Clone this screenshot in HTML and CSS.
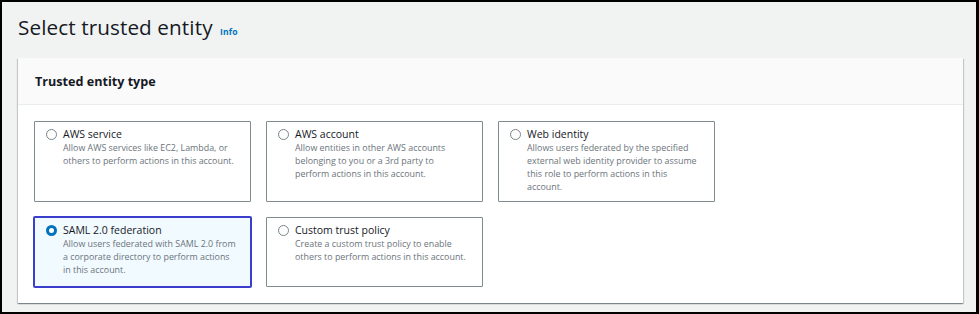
FILE: index.html
```html
<!DOCTYPE html>
<html lang="en">
<head>
  <meta charset="UTF-8">
  <title>Select trusted entity</title>
  <link rel="stylesheet" href="styles.css">
</head>
<body>

  <div class="page">
    <!-- Page header -->
    <h1 class="page-title">Select trusted entity <a class="info" href="#">Info</a></h1>

    <!-- Trusted entity type -->
    <section class="panel">
      <div class="panel-head">
        <h2>Trusted entity type</h2>
      </div>
      <div class="tiles">
        <label class="tile">
          <span class="radio"></span>
          <span class="tile-text">
            <span class="tile-title">AWS service</span>
            <span class="tile-desc">Allow AWS services like EC2, Lambda, or others to perform actions in this account.</span>
          </span>
        </label>
        <label class="tile">
          <span class="radio"></span>
          <span class="tile-text">
            <span class="tile-title">AWS account</span>
            <span class="tile-desc">Allow entities in other AWS accounts belonging to you or a 3rd party to perform actions in this account.</span>
          </span>
        </label>
        <label class="tile">
          <span class="radio"></span>
          <span class="tile-text">
            <span class="tile-title">Web identity</span>
            <span class="tile-desc">Allows users federated by the specified external web identity provider to assume this role to perform actions in this account.</span>
          </span>
        </label>
        <label class="tile selected">
          <span class="radio checked"></span>
          <span class="tile-text">
            <span class="tile-title">SAML 2.0 federation</span>
            <span class="tile-desc">Allow users federated with SAML 2.0 from a corporate directory to perform actions in this account.</span>
          </span>
        </label>
        <label class="tile">
          <span class="radio"></span>
          <span class="tile-text">
            <span class="tile-title">Custom trust policy</span>
            <span class="tile-desc">Create a custom trust policy to enable others to perform actions in this account.</span>
          </span>
        </label>
      </div>
    </section>
  </div>

</body>
</html>
```

FILE: styles.css
```css
html, body {
  margin: 0;
  padding: 0;
}
body {
  font-family: "Open Sans", "Noto Sans", sans-serif;
  color: #16191f;
}
.page {
  box-sizing: border-box;
  width: 979px;
  height: 314px;
  border: 2px solid #000;
  border-right-width: 3px;
  background: #f1f3f3;
  padding: 0 13px 0 16px;
  overflow: hidden;
}
.page-title {
  margin: 0;
  padding-top: 10px;
  font-size: 20.7px;
  line-height: 30px;
  font-weight: 400;
  letter-spacing: 0.1px;
}
.info {
  font-size: 8.6px;
  font-weight: 700;
  color: #0073bb;
  text-decoration: none;
  margin-left: 2px;
}
.panel {
  margin-top: 11px;
  background: #fff;
  box-shadow: 0 1px 1px 0 rgba(0, 28, 36, 0.3), 1px 1px 1px 0 rgba(0, 28, 36, 0.15), -1px 1px 1px 0 rgba(0, 28, 36, 0.15);
}
.panel-head {
  height: 46px;
  display: flex;
  align-items: center;
  padding: 0 17px;
  background: #fafafa;
  border-bottom: 1px solid #eaeded;
}
.panel-head h2 {
  margin: 0;
  font-size: 12.6px;
  font-weight: 700;
}
.tiles {
  display: grid;
  grid-template-columns: repeat(3, 217px);
  grid-auto-rows: minmax(70px, auto);
  gap: 15px;
  padding: 16px 16px 16px;
}
.tile {
  display: flex;
  gap: 6px;
  padding: 5px 12px 8px 11px;
  border: 1px solid #7f8a8c;
  border-radius: 1px;
  background: #fff;
}
.tile.selected {
  background: #f1faff;
  border-color: #3a3ecb;
  box-shadow: 0 0 0 1px #3a3ecb;
}
.radio {
  flex: none;
  box-sizing: border-box;
  width: 11px;
  height: 11px;
  margin-top: 2px;
  border: 1px solid #79858a;
  border-radius: 50%;
  background: #fff;
}
.radio.checked {
  border: 3.5px solid #0073bb;
}
.tile-text {
  display: flex;
  flex-direction: column;
}
.tile-title {
  font-size: 10.5px;
  line-height: 14px;
}
.tile-desc {
  font-size: 8.9px;
  line-height: 13px;
  color: #6b747b;
}
```
